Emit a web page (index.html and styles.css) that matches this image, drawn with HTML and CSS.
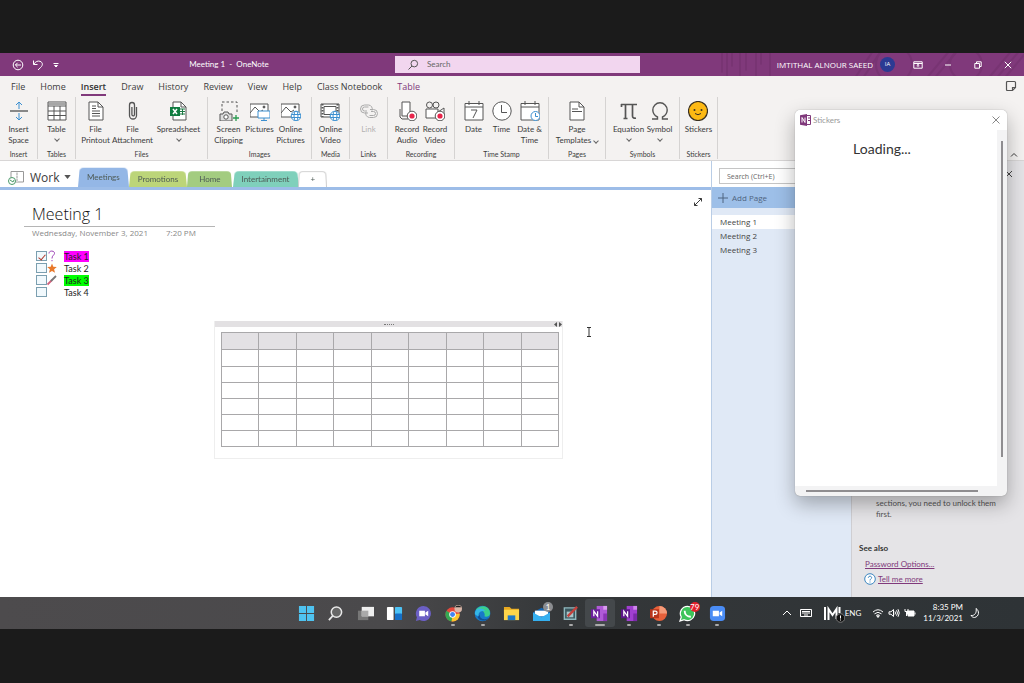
FILE: index.html
```html
<!DOCTYPE html>
<html lang="en">
<head>
<meta charset="utf-8">
<meta name="viewport" content="width=device-width, initial-scale=1">
<title>Meeting 1 - OneNote</title>
<link rel="stylesheet" href="styles.css">
</head>
<body>
<div class="desktop">
  <header class="titlebar">
    <svg class="titlebar-art" viewBox="0 0 320 24" preserveAspectRatio="xMaxYMid slice" aria-hidden="true"><g fill="none" stroke="#6d2e68" stroke-width="2"><path d="M18 0v20M23 0v24M28 0v14M36 0v24M42 0v18M52 0v24M57 0v12M66 0v24"/><path d="M152 24l16-24M160 24l16-24M224 24l20-24M232 24l20-24M286 24l20-24M294 24l20-24M302 24l20-24"/><circle cx="262" cy="12" r="16"/><circle cx="190" cy="12" r="18"/></g></svg>
    <div class="title-left">
      <div class="quick">
        <button class="bare" aria-label="Back"><svg width="12" height="12" viewBox="0 0 12 12"><circle cx="6" cy="6" r="4.8"/><path d="M9 6H3.4M5.6 3.8L3.4 6l2.2 2.2"/></svg></button>
        <button class="bare" aria-label="Undo"><svg width="12" height="12" viewBox="0 0 12 12"><path d="M1.5 1.5v4h4M1.8 5.2C3.5 2.4 6 1.600 8 2.300c3 1 3 4 .8 6L6 11"/></svg></button>
        <button class="bare" aria-label="Customize"><svg width="8" height="8" viewBox="0 0 8 8"><path d="M1.500 2.500h5M2.500 4.500L4 6l1.500-1.500z"/></svg></button>
      </div>
      <h1 class="app-title">Meeting 1&nbsp; -&nbsp; OneNote</h1>
    </div>
    <label class="search"><svg width="12" height="12" viewBox="0 0 12 12"><circle cx="7.300" cy="4.600" r="3.300"/><path d="M5 7L1.500 10.500"/></svg><input type="text" placeholder="Search" aria-label="Search"></label>
    <div class="title-right">
      <span>IMTITHAL ALNOUR SAEED</span>
      <span class="avatar">IA</span>
      <div class="win-buttons">
        <button class="bare" aria-label="Ribbon display"><svg width="10" height="10" viewBox="0 0 10 10"><path d="M.8 1.800h8.400v6.400H.8zM.8 3.500h8.400M5 7V4.500M3.700 5.600L5 4.400l1.300 1.200"/></svg></button>
        <button class="bare" aria-label="Minimize"><svg width="10" height="10" viewBox="0 0 10 10"><path d="M2 5h6"/></svg></button>
        <button class="bare" aria-label="Restore"><svg width="10" height="10" viewBox="0 0 10 10"><path d="M1.800 3.500h4.700v4.700H1.800zM3.500 3.300V1.800h4.700v4.700H6.700"/></svg></button>
        <button class="bare" aria-label="Close"><svg width="10" height="10" viewBox="0 0 10 10"><path d="M1.800 1.800l6.400 6.400M8.200 1.800L1.800 8.200"/></svg></button>
      </div>
    </div>
  </header>

  <nav class="menu">
    <button>File</button><button>Home</button><button class="active">Insert</button><button>Draw</button><button>History</button><button>Review</button><button>View</button><button>Help</button><button>Class Notebook</button><button class="context">Table</button>
    <button class="feed" aria-label="Feed"><svg width="12" height="12" viewBox="0 0 12 12"><path stroke-width="1.200" d="M2.500 1.500h7q1 0 1 1V7.500l-3 3h-5q-1 0-1-1v-7q0-1 1-1zM10.500 7.500h-3v3"/></svg></button>
  </nav>

  <section class="ribbon">
    <div class="group slim"><div class="tools">
      <button class="tool"><svg viewBox="0 0 20 20"><path stroke="#888" stroke-width="2" d="M1 10h18"/><path stroke="#3b8fd0" d="M10 8V1M7 4l3-3 3 3M10 12v7M7 16l3 3 3-3"/></svg>Insert<br>Space</button>
    </div><span class="caption">Insert</span></div>
    <div class="group slim"><div class="tools">
      <button class="tool"><svg viewBox="0 0 20 20"><path fill="#fff" d="M1 1h18v18H1z"/><path d="M1 5h18M1 10h18M1 14.500h18M7 5v14M13 5v14"/><path d="M1 3h18" stroke-width="1.500" stroke="#888"/></svg>Table<i class="chev"></i></button>
    </div><span class="caption">Tables</span></div>
    <div class="group files"><div class="tools">
      <button class="tool w28"><svg viewBox="0 0 20 20"><path fill="#fff" d="M3 1h9l5 5v13H3z"/><path d="M12 1v5h5M6 5h4M6 7.500h4M6 10h8M6 12.500h8M6 15h8"/></svg>File<br>Printout</button>
      <button class="tool w46"><svg viewBox="0 0 20 20"><path d="M13.500 6v8.500a3.500 3.500 0 0 1-7 0V4a2.500 2.500 0 0 1 5 0v9.500a1.300 1.300 0 0 1-2.600 0V6" stroke-width="1.300"/></svg>File<br>Attachment</button>
      <button class="tool w46"><svg viewBox="0 0 20 20"><path fill="#fff" d="M4 1h8l5 5v13H4z"/><path d="M12 1v5h5"/><path d="M11 8h5M11 10.500h5M11 13h5M13.500 8v6" stroke="#1d7a45"/><path d="M1 6h10v9H1z" fill="#107c41" stroke="none"/><path d="M4 8l4 5M8 8l-4 5" stroke="#fff" stroke-width="1.500"/></svg>Spreadsheet<i class="chev"></i></button>
    </div><span class="caption">Files</span></div>
    <div class="group images"><div class="tools">
      <button class="tool w34"><svg viewBox="0 0 20 20"><path stroke-dasharray="2.500 2" d="M3 10V1h15v12"/><path fill="#ddd" d="M1 13h3l1-2h4l1 2h3v7H1z"/><circle cx="7" cy="16" r="2.200" fill="#fff"/><path stroke="#2a9c50" stroke-width="1.300" d="M14 17h6M17 14v6"/></svg>Screen<br>Clipping</button>
      <button class="tool w28"><svg viewBox="0 0 20 20"><path fill="#fff" d="M0 3h18v13H0z"/><path d="M0 12l5-6 5 5 3-2"/><circle cx="14" cy="6" r="1" fill="#444"/><path fill="#fff" stroke="#3b8fd0" d="M8 10h12v7H8zM14 17v2.500M11 19.500h6"/></svg>Pictures</button>
      <button class="tool w34"><svg viewBox="0 0 20 20"><path fill="#fff" d="M0 3h18v13H0z"/><path d="M0 12l5-6 5 5 3-2"/><circle cx="14" cy="6" r="1" fill="#444"/><g fill="#fff" stroke="#3b8fd0"><circle cx="15" cy="15" r="4.800"/><ellipse cx="15" cy="15" rx="2" ry="4.800"/><path d="M10.500 13.500h9M10.500 16.500h9"/></g></svg>Online<br>Pictures</button>
    </div><span class="caption">Images</span></div>
    <div class="group slim"><div class="tools">
      <button class="tool"><svg viewBox="0 0 20 20"><path fill="#fff" d="M1 3h18v13H1z"/><path d="M2.500 3v13M17.500 3v13" stroke-dasharray="1.500 1.500" stroke-width="2"/><path d="M4 5.500h12v8H4z"/><g fill="#fff" stroke="#3b8fd0"><circle cx="15" cy="15" r="4.800"/><ellipse cx="15" cy="15" rx="2" ry="4.800"/><path d="M10.500 13.500h9M10.500 16.500h9"/></g></svg>Online<br>Video</button>
    </div><span class="caption">Media</span></div>
    <div class="group slim"><div class="tools">
      <button class="tool" disabled><svg viewBox="0 0 20 20"><g stroke="#aaa"><path d="M9 12H5.500a4 4 0 0 1 0-8h4a4 4 0 0 1 3.500 5.500"/><path d="M11 8.500h3.500a4 4 0 0 1 0 8h-4a4 4 0 0 1-3.500-5.500"/><path d="M8 10H5.500a2 2 0 0 1 0-4h4M12 10.500h2.500a2 2 0 0 1 0 4h-4"/></g></svg>Link</button>
    </div><span class="caption">Links</span></div>
    <div class="group recording"><div class="tools">
      <button class="tool w28"><svg viewBox="0 0 20 20"><path fill="#fff" d="M5 1h8v14H5z"/><path d="M3 8v8l2 2h6"/><circle cx="15" cy="15" r="4.800" fill="#fff"/><circle cx="15" cy="15" r="2.600" fill="#e8264b" stroke="none"/></svg>Record<br>Audio</button>
      <button class="tool w28"><svg viewBox="0 0 20 20"><circle cx="4.500" cy="4" r="3"/><circle cx="11" cy="4" r="3"/><path fill="#fff" d="M1 8h12v9H1zM13 11l6-4v10"/><circle cx="15" cy="15" r="4.800" fill="#fff"/><circle cx="15" cy="15" r="2.600" fill="#e8264b" stroke="none"/></svg>Record<br>Video</button>
    </div><span class="caption">Recording</span></div>
    <div class="group stamp"><div class="tools">
      <button class="tool w28"><svg viewBox="0 0 20 20"><path fill="#fff" d="M1 2.500h18V19H1z"/><path d="M1 6h18M5 0v4M15 0v4M7 9h6l-4 8"/></svg>Date</button>
      <button class="tool w28"><svg viewBox="0 0 20 20"><circle cx="10" cy="10" r="9.200" fill="#fff"/><path d="M9.500 4v7.500H15"/></svg>Time</button>
      <button class="tool w28"><svg viewBox="0 0 20 20"><path fill="#fff" d="M1 2.500h18V19H1z"/><path d="M1 6h18M5 0v4M15 0v4"/><g stroke="#3b8fd0"><circle cx="15.500" cy="15" r="4.500" fill="#fff"/><path d="M15.500 12v3.500H18"/></g></svg>Date &amp;<br>Time</button>
    </div><span class="caption">Time Stamp</span></div>
    <div class="group pages"><div class="tools">
      <button class="tool w46"><svg viewBox="0 0 20 20"><path fill="#fff" d="M3 1h9l5 5v13H3z"/><path d="M12 1v5h5M5 8h6M5 10.500h10"/></svg>Page<span class="with-chev">Templates<i class="chev"></i></span></button>
    </div><span class="caption">Pages</span></div>
    <div class="group symbols"><div class="tools">
      <button class="tool w34"><svg viewBox="0 0 20 20"><path stroke-width="1.700" d="M2 3.500h16M6.500 4v13M4.500 17.500h4M13.500 4v11q0 2.500 3.500 2.200M2.500 3v3"/></svg>Equation<i class="chev"></i></button>
      <button class="tool w28"><svg viewBox="0 0 20 20"><path stroke-width="1.400" d="M2 18h5.500v-2C4.500 14.500 2.800 12 2.800 9a7.200 7.200 0 0 1 14.400 0c0 3-1.700 5.500-4.700 7v2H18"/></svg>Symbol<i class="chev"></i></button>
    </div><span class="caption">Symbols</span></div>
    <div class="group slim"><div class="tools">
      <button class="tool"><svg viewBox="0 0 20 20"><circle cx="10" cy="10" r="9.500" fill="#fdb913" stroke="#3a3020" stroke-width="1.200"/><circle cx="6.500" cy="9" r="1" fill="#3a3020" stroke="none"/><circle cx="13.500" cy="9" r="1" fill="#3a3020" stroke="none"/><path stroke="#3a3020" d="M7 12.500q3 2.500 6 0"/></svg>Stickers</button>
    </div><span class="caption">Stickers</span></div>
    <button class="collapse" aria-label="Collapse ribbon"><svg width="8" height="8" viewBox="0 0 8 8"><path d="M1 5.500l3-3 3 3"/></svg></button>
  </section>

  <div class="workspace">
    <main class="notebook">
      <div class="sections">
        <button class="book"><svg width="18" height="16" viewBox="0 0 18 16"><path fill="none" stroke="#999" d="M3 9V2.500h6v10.500H7M9 2.500h6.500v10.500H9"/><path fill="none" stroke="#fff" stroke-dasharray="1 2" d="M9 3v10"/><circle cx="4" cy="12" r="3.500" fill="#fff" stroke="#4b9a6a"/><path fill="none" stroke="#4b9a6a" d="M2 11l3 2 1-2"/></svg>Work<svg width="7" height="4" viewBox="0 0 8 5"><path fill="#555" d="M0 0h8L4 5z"/></svg></button>
        <button class="tab current">Meetings</button>
        <button class="tab lime">Promotions</button>
        <button class="tab green">Home</button>
        <button class="tab teal">Intertainment</button>
        <button class="tab add" aria-label="New section">+</button>
      </div>
      <article class="page">
        <button class="expand" aria-label="Full page view"><svg width="10" height="10" viewBox="0 0 10 10"><path d="M1.500 8.500l7-7M5.500 1.500h3v3M1.500 5.500v3h3"/></svg></button>
        <h2 class="page-title">Meeting 1</h2>
        <p class="page-date"><span>Wednesday, November 3, 2021</span><span>7:20 PM</span></p>
        <ul class="tasks">
          <li><input type="checkbox" id="t1" checked><svg viewBox="0 0 10 12"><path fill="none" stroke="#9b3fb5" d="M2 3.500C2 0 8 .5 7.500 3.500 7 5.500 5 5.500 5 8.500M5 10v1.200"/></svg><label for="t1"><mark class="pink">Task 1</mark></label></li>
          <li><input type="checkbox" id="t2"><svg viewBox="0 0 10 12"><path fill="#e8792c" d="M5 1.500l1.300 3.200 3.500.3-2.700 2.200.9 3.500L5 8.900l-3 1.800.9-3.500L.2 5l3.500-.3z"/></svg><label for="t2">Task 2</label></li>
          <li><input type="checkbox" id="t3"><svg viewBox="0 0 10 12"><path stroke="#d0607c" stroke-width="1.800" d="M.5 10.500L5 6"/><path stroke="#777" stroke-width="1.800" d="M4 7l5-5"/></svg><label for="t3"><mark class="lime-mark">Task 3</mark></label></li>
          <li><input type="checkbox" id="t4"><svg viewBox="0 0 10 12"></svg><label for="t4">Task 4</label></li>
        </ul>
        <div class="note-box">
          <div class="handle"><span class="grip"></span><svg width="8" height="5" viewBox="0 0 8 5"><path fill="#555" d="M3 0v5L0 2.500zM5 0v5l3-2.500z"/></svg></div>
          <table class="grid">
            <thead><tr><th></th><th></th><th></th><th></th><th></th><th></th><th></th><th></th><th></th></tr></thead>
            <tbody>
              <tr><td></td><td></td><td></td><td></td><td></td><td></td><td></td><td></td><td></td></tr>
              <tr><td></td><td></td><td></td><td></td><td></td><td></td><td></td><td></td><td></td></tr>
              <tr><td></td><td></td><td></td><td></td><td></td><td></td><td></td><td></td><td></td></tr>
              <tr><td></td><td></td><td></td><td></td><td></td><td></td><td></td><td></td><td></td></tr>
              <tr><td></td><td></td><td></td><td></td><td></td><td></td><td></td><td></td><td></td></tr>
              <tr><td></td><td></td><td></td><td></td><td></td><td></td><td></td><td></td><td></td></tr>
            </tbody>
          </table>
        </div>
        <svg class="caret" width="6" height="10" viewBox="0 0 6 10"><path d="M1 .5h4M3 .5v9M1 9.500h4"/></svg>
      </article>
    </main>
    <aside class="page-list">
      <div class="find"><input type="text" placeholder="Search (Ctrl+E)" aria-label="Search pages"></div>
      <button class="add-page"><svg width="10" height="10" viewBox="0 0 10 10"><path d="M5 0v10M0 5h10"/></svg>Add Page</button>
      <ul>
        <li class="selected"><a href="#m1">Meeting 1</a></li>
        <li><a href="#m2">Meeting 2</a></li>
        <li><a href="#m3">Meeting 3</a></li>
      </ul>
    </aside>
    <aside class="help">
      <button class="bare help-close" aria-label="Close pane"><svg width="8" height="8" viewBox="0 0 8 8"><path d="M1 1l6 6M7 1L1 7"/></svg></button>
      <div class="help-text">
        <p>sections, you need to unlock them first.</p>
        <h3>See also</h3>
        <a href="#password">Password Options...</a>
        <div class="more"><svg width="12" height="12" viewBox="0 0 12 12"><circle cx="6" cy="6" r="5.300" fill="#fff" stroke="#3b86c0"/><path fill="none" stroke="#3b86c0" d="M4.300 4.800c0-2.300 3.500-2 3.300 0C7.500 6 6 6 6 7.500M6 8.500v1"/></svg><a href="#more">Tell me more</a></div>
      </div>
    </aside>
  </div>

  <section class="dialog" role="dialog" aria-label="Stickers">
    <header><svg width="11" height="12" viewBox="0 0 11 12"><path fill="#fff" stroke="#80397b" d="M5 1.500h5.500v9H5M8 4h2.500M8 6.500h2.500"/><path fill="#80397b" d="M0 1.200L7 0v12L0 10.800z"/><path fill="none" stroke="#fff" d="M2 8.500v-5l3 5v-5"/></svg><span>Stickers</span><button class="bare" aria-label="Close"><svg width="8" height="8" viewBox="0 0 8 8"><path d="M.5.5l7 7M7.500.5l-7 7"/></svg></button></header>
    <div class="dialog-body"><p>Loading...</p></div>
    <div class="vbar"><i></i></div>
    <div class="hbar"><i></i></div>
  </section>

  <footer class="taskbar">
    <span></span>
    <div class="apps">
      <button aria-label="Start"><svg viewBox="0 0 18 18"><path fill="#4fc3f0" d="M1 1h7.500v7.500H1zM9.500 1H17v7.500H9.500zM1 9.500h7.500V17H1zM9.500 9.500H17V17H9.500z"/></svg></button>
      <button aria-label="Search"><svg viewBox="0 0 18 18"><circle cx="10" cy="7.500" r="5.500" fill="#666" stroke="#e8e8e8" stroke-width="1.600"/><path stroke="#e8e8e8" stroke-width="1.800" d="M6 11.500L2 16"/></svg></button>
      <button aria-label="Task view"><svg viewBox="0 0 18 18"><path fill="#777" d="M1 6h11v10H1z"/><path fill="#eee" d="M5 2h13v10H5z"/><path fill="#aaa" d="M5 6h7v6H5z"/></svg></button>
      <button aria-label="Widgets"><svg viewBox="0 0 18 18"><rect x="1" y="2" width="7" height="14" rx="1" fill="#fff"/><rect x="9.500" y="2" width="7.500" height="8" rx="1" fill="#4cc2f5"/><rect x="9.500" y="9" width="7.500" height="7" rx="1" fill="#1670c8"/></svg></button>
      <button aria-label="Chat"><svg viewBox="0 0 18 18"><path fill="#6b5fc4" d="M9 1a8 8 0 1 1-4 15L1 17l1-4A8 8 0 0 1 9 1z"/><path fill="#fff" d="M4.500 6h6v6h-6zM11 8l3-2v6l-3-2z"/></svg></button>
      <button class="open" aria-label="Chrome"><svg viewBox="0 0 18 18"><circle cx="8" cy="10" r="7.500" fill="#e6483c"/><path fill="#35a853" d="M8 10L1.500 6.200A7.500 7.500 0 0 0 7 17.500z"/><path fill="#fbc52d" d="M8 10l7.500-1A7.500 7.500 0 0 1 7 17.500z"/><circle cx="8" cy="10" r="3.500" fill="#fff"/><circle cx="8" cy="10" r="2.600" fill="#4285f4"/><circle cx="14" cy="4" r="4" fill="#d9b7a8"/><path fill="#222" d="M10.500 2.500a4 4 0 0 1 7 0z"/></svg></button>
      <button class="open" aria-label="Edge"><svg viewBox="0 0 18 18"><circle cx="9" cy="9" r="8.300" fill="#1878c9"/><path fill="#3bcf8c" d="M2 5c4-6 15-5 15 4 0 3-4 4-6 3 1-2 0-6-4-6-2 0-4 0-5-1z"/><path fill="#35b7e6" d="M1 9c0-6 9-7 11-2-5-2-8 2-7 5-2-1-4-1-4-3z"/><path fill="#124f93" d="M6 10c0 5 5 6 9 4-2 3-9 4-11-1z"/></svg></button>
      <button aria-label="Explorer"><svg viewBox="0 0 18 18"><path fill="#e8a820" d="M1 2h6l2 2h8v4H1z"/><path fill="#ffd54a" d="M1 5h16v11H1z"/><path fill="#1f78c8" d="M5 11h8v5H5z"/></svg></button>
      <button aria-label="Mail"><svg viewBox="0 0 18 18"><path fill="#1565b0" d="M0 8l9-5 9 5v9H0z"/><path fill="#fff" d="M2 6h14v6H2z"/><path fill="#35b0f0" d="M0 8l9 5 9-5v9H0z"/></svg><b class="badge grey">1</b></button>
      <button class="open" aria-label="Snip"><svg viewBox="0 0 18 18"><path fill="#3c5960" stroke="#8fb8bd" stroke-width="1.500" d="M2.500 3h12v12h-12z"/><path fill="#a9c6c9" d="M5 7h7v6H5z"/><path stroke="#c4423c" stroke-width="2.500" d="M6 12l10-10"/></svg></button>
      <button class="open focus" aria-label="OneNote"><svg viewBox="0 0 18 18"><path fill="#b05ad8" d="M6 1h11v16H6z"/><path fill="#d99af0" d="M13 1h4v4h-4z"/><path fill="#8a35b5" d="M13 9h4v8h-4z"/><path fill="#6b1f9c" d="M0 4.500h9.500V14H0z"/><path fill="none" stroke="#fff" stroke-width="1.300" d="M3 12V6.500l4 5.500V6.500"/></svg></button>
      <button class="open" aria-label="OneNote for Windows"><svg viewBox="0 0 18 18"><path fill="#a03fd0" d="M6 1h11v16H6z"/><path fill="#cf85ee" d="M13 1h4v4h-4z"/><path fill="#7a2aa8" d="M13 9h4v8h-4z"/><path fill="#5b1688" d="M0 4.500h9.500V14H0z"/><path fill="none" stroke="#fff" stroke-width="1.300" d="M3 12V6.500l4 5.500V6.500"/></svg></button>
      <button class="open" aria-label="PowerPoint"><svg viewBox="0 0 18 18"><circle cx="10" cy="9" r="8" fill="#e8603a"/><path fill="#f59a78" d="M10 1a8 8 0 0 1 8 8h-8z"/><path fill="#b8351b" d="M0 4.500h9.500V14H0z"/><path fill="none" stroke="#fff" stroke-width="1.300" d="M3.500 12.500V6.500h2q2 0 2 1.700t-2 1.700h-2"/></svg></button>
      <button class="open" aria-label="WhatsApp"><svg viewBox="0 0 18 18"><path fill="#3dc45a" stroke="#fff" stroke-width="1.300" d="M9 1.500A7.500 7.500 0 1 1 5.500 15.600L1 17l1.400-4.300A7.500 7.500 0 0 1 9 1.500z"/><path fill="none" stroke="#fff" stroke-width="2" d="M6 6c0 4 3 6.500 6.500 6.500"/></svg><b class="badge">79</b></button>
      <button class="open" aria-label="Zoom"><svg viewBox="0 0 18 18"><rect x="1" y="1" width="16" height="16" rx="4" fill="#4a8cf5"/><path fill="#fff" d="M4 6h6.500v6H4zM11.200 8L14 6v6l-2.800-2z"/></svg></button>
    </div>
    <div class="tray">
      <div class="hidden-icons">
        <svg width="10" height="10" viewBox="0 0 10 10"><path d="M1 7l4-4 4 4"/></svg>
        <svg width="12" height="10" viewBox="0 0 12 10"><path d="M.5 1.500h11v7H.5zM2 3.500h8M2 5h8M4 7h4"/></svg>
      </div>
      <div class="lang"><svg width="22" height="20" viewBox="0 0 22 20"><g stroke="#fff" stroke-width="2"><path d="M2 4v13M5.500 17V6l4 6 4-6v10M16.500 4v6"/></g><circle cx="17.500" cy="15" r="4.300" fill="#111" stroke="#777"/><path d="M17.500 12.500v3M17.500 16.500v1"/></svg><span>ENG</span></div>
      <div class="status">
        <svg width="12" height="10" viewBox="0 0 12 10"><path d="M1 4q5-4.500 10 0M2.500 5.800q3.500-3 7 0M4.200 7.500q1.800-1.500 3.600 0"/><circle cx="6" cy="8.500" r=".8" fill="#fff"/></svg>
        <svg width="12" height="10" viewBox="0 0 12 10"><path d="M1 3.800h2L5.500 1.500v7L3 6.200H1zM7 3.500q1 1.500 0 3M8.500 2.300q2 2.700 0 5.400M10 1.200q2.500 3.800 0 7.600"/></svg>
        <svg width="12" height="10" viewBox="0 0 12 10"><path fill="#fff" d="M3 3h7v5H4V6H3z"/><path d="M11 4.500v2M1 1v2.500h3V1M2.500 4v4"/></svg>
      </div>
      <time>8:35 PM<br>11/3/2021</time>
      <svg width="10" height="12" viewBox="0 0 10 12"><path d="M6 1.500c3.500 2 3.500 8-1.500 9-1.500 0-3-1-3.500-2C5 9 7 5 6 1.500z"/></svg>
    </div>
  </footer>
</div>
</body>
</html>
```
FILE: styles.css
```css
* { box-sizing: border-box; }

body {
  margin: 0;
  padding: 53px 0 54px;
  min-height: 100vh;
  display: flex;
  background: #1b1b1b;
  font: 8px/11px Lato, "Open Sans", sans-serif;
  color: #3c3c3c;
}

button {
  margin: 0;
  padding: 0;
  border: 0;
  background: none;
  font: inherit;
  color: inherit;
}

input { font: inherit; color: inherit; }
ul, p, h1, h2, h3 { margin: 0; padding: 0; font: inherit; list-style: none; }
svg { display: block; flex: none; }

.desktop {
  position: relative;
  flex: 1;
  display: flex;
  flex-direction: column;
  min-width: 0;
  background: #fff;
}

.bare { display: grid; place-items: center; }
.bare svg, .search svg, .feed svg, .collapse svg, .expand svg, .tray svg, .caret {
  fill: none;
  stroke: currentColor;
}

/* Title bar */
.titlebar {
  position: relative;
  display: grid;
  grid-template-columns: 395fr 245fr 384fr;
  align-items: center;
  height: 23px;
  background: #80397b;
  color: #fff;
}
.titlebar-art { position: absolute; right: 0; top: 0; width: 320px; height: 23px; opacity: .4; }
.title-left { display: grid; grid-template-columns: 80px 1fr; align-items: center; padding-left: 12px; }
.quick { display: flex; align-items: center; gap: 8px; }
.app-title { padding-right: 29px; text-align: center; }
.search { display: flex; align-items: center; gap: 8px; height: 17px; padding-left: 12px; background: #f2d6ef; color: #555; }
.search input { flex: 1; min-width: 0; padding: 0; border: 0; outline: 0; background: none; }
.search input::placeholder, .find input::placeholder { color: #666; opacity: 1; }
.title-right { position: relative; display: flex; align-items: center; justify-content: flex-end; gap: 7px; padding-right: 11px; font-family: "Open Sans", sans-serif; }
.avatar { width: 15px; height: 15px; border-radius: 50%; background: #2b3a93; font-size: 6px; line-height: 15px; text-align: center; }
.win-buttons { display: flex; gap: 20px; padding-left: 11px; }

/* Menu */
.menu { display: flex; align-items: center; gap: 15px; height: 21px; padding: 1px 11px 0; background: #f4f2f1; font-family: "Open Sans", "Noto Sans", sans-serif; font-size: 9px; }
.menu button { height: 17px; border-bottom: 2px solid transparent; }
.menu .active { border-color: #80397b; font-weight: 600; color: #333; }
.menu .context { color: #80397b; }
.menu .feed { margin-left: auto; margin-right: -4px; color: #555; }

/* Ribbon */
.ribbon {
  position: relative;
  display: flex;
  height: 64px;
  padding-bottom: 1px;
  background: #f4f2f1;
  border-bottom: 1px solid #d8d6d6;
}
.group { display: flex; flex-direction: column; justify-content: space-between; align-items: center; border-right: 1px solid #d5d3d2; }
.tools { display: flex; justify-content: center; padding-top: 4px; }
.slim { width: 38px; }
.files { width: 132px; }
.images { width: 104px; }
.recording { width: 67px; }
.stamp { width: 94px; }
.pages { width: 57px; }
.symbols { width: 74px; }
.tool { display: flex; flex-direction: column; align-items: center; white-space: nowrap; }
.tool svg { width: 20px; height: 20px; margin: 0 auto 3px; fill: none; stroke: #555; }
.tool:disabled { color: #b5b3b3; }
.w28 { width: 28px; }
.w34 { width: 34px; }
.w46 { width: 46px; }
.chev { width: 4px; height: 4px; margin-top: 2px; border: solid #666; border-width: 0 1px 1px 0; transform: rotate(45deg); }
.with-chev { display: flex; align-items: center; gap: 3px; }
.with-chev .chev { margin: 0; }
.caption { font-size: 7px; line-height: 9px; }
.collapse { position: absolute; right: 6px; bottom: 1px; }

/* Workspace */
.workspace { flex: 1; display: grid; grid-template-columns: 1fr 140px 173px; min-height: 0; }
.notebook { display: flex; flex-direction: column; min-width: 0; }
.sections { display: flex; align-items: flex-end; height: 29px; padding-left: 8px; border-bottom: 3px solid #9dbde8; }
.book { display: flex; align-items: center; gap: 4px; width: 70px; height: 20px; font-family: "Open Sans", sans-serif; font-size: 12px; }
.tab { position: relative; z-index: 0; height: 16px; padding: 0 9px; color: #4d5a55; }
.tab::before {
  content: "";
  position: absolute;
  z-index: -1;
  inset: -1px 0 0;
  border-radius: 4px 4px 0 0;
  background: var(--tint);
  transform: perspective(60px) rotateX(12deg);
  transform-origin: bottom;
}
.current { --tint: #94b7e6; height: 20px; }
.lime { --tint: #bcd579; }
.green { --tint: #a3cc80; padding: 0 12px; }
.teal { --tint: #7fd0bb; }
.add { --tint: #fff; padding: 0 12px; }
.add::before { border: 1px solid #ccc; border-bottom: 0; }

.page { position: relative; flex: 1; padding: 13px 24px 0; }
.expand { position: absolute; right: 8px; top: 7px; }
.page-title { width: 191px; padding-left: 8px; border-bottom: 1px solid #b5b5b5; font: 300 16px/23px "Open Sans", sans-serif; color: #111; }
.page-date { display: flex; gap: 18px; padding-left: 8px; font-family: "Open Sans", sans-serif; color: #888; }
.tasks { padding: 12px 0 0 12px; font-size: 9px; color: #222; }
.tasks li { display: flex; align-items: center; height: 12px; }
.tasks svg { width: 10px; height: 12px; margin-right: 7px; }
.tasks input {
  appearance: none;
  display: grid;
  place-items: center;
  width: 11px;
  height: 10px;
  margin: 0;
  border: 1px solid #7b9fb0;
  background: #f1f9fd;
}
.tasks input:checked::after { content: ""; width: 3px; height: 6px; border: solid #b03a2e; border-width: 0 1px 1px 0; transform: rotate(40deg); }
.tasks mark { display: block; color: #222; }
.tasks .pink { background: #f0f; }
.tasks .lime-mark { background: #0f0; }

.note-box { width: 349px; margin: 23px 0 0 190px; padding-bottom: 11px; border: 1px solid #eee; border-top: 0; }
.handle { display: flex; align-items: center; justify-content: flex-end; height: 6px; background: #e3e1e3; }
.grip { width: 10px; margin-right: 160px; border-top: 1px dotted #777; }
.grid { width: 338px; margin: 5px 0 0 6px; border-collapse: collapse; table-layout: fixed; }
.grid th, .grid td { height: 16px; padding: 0; border: 1px solid #a9a8aa; }
.grid th, .grid tbody tr:first-child td { height: 17px; }
.grid th { background: #e3e1e4; }
.caret { position: absolute; left: 586px; top: 137px; color: #333; }

/* Page list */
.page-list { background: #e0e9f6; border-left: 1px solid #b9cde6; }
.find { height: 26px; padding: 7px 0 3px 7px; background: #fff; }
.find input { display: block; width: 100%; height: 16px; padding: 0 7px; border: 1px solid #c5c5c5; font: 7px "Open Sans", sans-serif; }
.add-page { display: flex; align-items: center; gap: 4px; width: 100%; height: 21px; padding-left: 6px; background: #9dbfe8; color: #4f6480; font-family: "Open Sans", sans-serif; }
.add-page svg { stroke: currentColor; }
.page-list ul { padding-top: 7px; }
.page-list li { height: 14px; padding-left: 8px; line-height: 14px; font-family: "Open Sans", sans-serif; }
.page-list a { color: #444; text-decoration: none; }
.page-list .selected { background: #fff; }

/* Help pane */
.help { display: flex; flex-direction: column; justify-content: space-between; background: #e5e4e7; border-left: 1px solid #cfced2; }
.help-close { align-self: flex-end; margin: 9px 11px 0 0; color: #444; }
.help-text { padding: 0 20px 12px 7px; }
.help-text p { padding-left: 17px; color: #555; }
.help-text h3 { margin: 23px 0 5px; font-weight: 700; color: #333; }
.help-text a { color: #80397b; }
.help-text > a { margin-left: 6px; }
.more { display: flex; align-items: center; gap: 2px; margin-top: 3px; padding-left: 5px; }

/* Floating sticker window */
.dialog {
  position: absolute;
  top: 57px;
  right: 17px;
  display: grid;
  grid-template: 20px 1fr 10px / 1fr 10px;
  width: 212px;
  height: 386px;
  border-radius: 5px;
  overflow: hidden;
  background: #f3f3f4;
  box-shadow: 0 0 1px #777, 0 8px 20px rgba(0, 0, 0, .3);
}
.dialog header { grid-column: 1 / 3; display: flex; align-items: center; gap: 2px; padding: 0 7px 0 5px; background: #fff; color: #999; }
.dialog header button { margin-left: auto; color: #888; }
.dialog-body { background: #fff; }
.dialog-body p { padding: 8px 28px 0 0; text-align: center; font-size: 14px; line-height: 22px; color: #333; }
.vbar { padding: 11px 4px 0; }
.vbar i { display: block; width: 2px; height: 316px; background: #8f8d90; }
.hbar { grid-column: 1 / 3; padding: 4px 29px 0 11px; }
.hbar i { display: block; height: 2px; background: #8f8d90; }

/* Taskbar */
.taskbar {
  display: grid;
  grid-template-columns: 1fr 440px 1fr;
  align-items: center;
  height: 32px;
  background: linear-gradient(90deg, #4d4b4d 0%, #4a494b 38%, #343739 55%, #2e3336 100%);
  color: #fff;
}
.apps { display: grid; grid-template-columns: repeat(15, 1fr); height: 28px; }
.apps button { position: relative; display: grid; place-items: center; border-radius: 3px; }
.apps svg { width: 17px; height: 17px; }
.focus { background: #44484b; }
.open::after { content: ""; position: absolute; bottom: 1px; left: 50%; width: 4px; height: 2px; margin-left: -2px; border-radius: 1px; background: #aaa; }
.focus::after { width: 10px; margin-left: -5px; }
.badge { position: absolute; top: 3px; right: 3px; min-width: 10px; height: 10px; border-radius: 5px; background: #e5202b; line-height: 10px; font-weight: 400; }
.badge.grey { background: #8b8d90; }
.tray { display: flex; align-items: center; justify-content: flex-end; padding-right: 44px; gap: 7px; }
.hidden-icons { display: flex; gap: 8px; padding-right: 4px; }
.lang { display: flex; align-items: center; }
.status { display: flex; gap: 4px; padding-left: 4px; }
.tray time { text-align: right; }
```
